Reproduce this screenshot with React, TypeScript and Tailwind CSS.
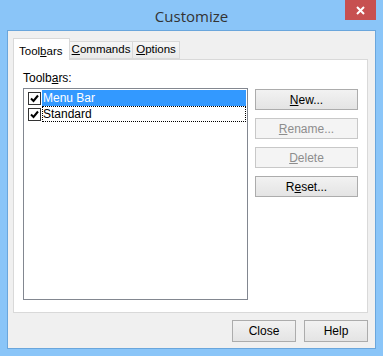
import React from "react";

const font = { fontFamily: '"Liberation Sans", Arial, sans-serif' };

function Check() {
  return (
    <div className="w-[13px] h-[13px] border border-[#333] bg-white flex items-center justify-center shrink-0">
      <svg width="9" height="9" viewBox="0 0 9 9">
        <path d="M1 4.5 L3.5 7 L8 1.5" stroke="#000" strokeWidth="2" fill="none" />
      </svg>
    </div>
  );
}

function Btn({ children, disabled }: { children: React.ReactNode; disabled?: boolean }) {
  return (
    <div
      className={
        "h-[21px] w-[103px] flex items-center justify-center text-[12px] border " +
        (disabled
          ? "border-[#c8c8c8] bg-[#f4f4f4] text-[#8d8d8d]"
          : "border-[#acacac] bg-gradient-to-b from-[#f2f2f2] to-[#e4e4e4] text-black")
      }
    >
      {children}
    </div>
  );
}

export default function App() {
  return (
    <div className="w-[383px] h-[356px] bg-[#8ac5f8] flex flex-col" style={font}>
      <div className="h-[30px] relative flex items-center justify-center shrink-0">
        <span className="text-[15px] text-[#333] mt-[2px]" style={{ fontFamily: '"Open Sans", sans-serif' }}>
          Customize
        </span>
        <div className="absolute right-[7px] top-0 w-[31px] h-[20px] bg-[#c75050] flex items-center justify-center">
          <svg width="9" height="9" viewBox="0 0 9 9">
            <path d="M1 1 L8 8 M8 1 L1 8" stroke="#fff" strokeWidth="2" />
          </svg>
        </div>
      </div>
      <div className="mx-[7px] mb-[7px] flex-1 border border-[#6aa6dc] bg-[#f0f0f0] flex flex-col pl-[5px] pr-[7px] pt-[7px] pb-[6px]">
        <div className="flex items-end h-[21px]">
          <div className="h-[22px] w-[57px] bg-white border border-b-0 border-[#d9d9d9] flex items-start pt-[4px] pl-[5px] text-[11.5px] relative z-10 -mb-px">
            Tool<u>b</u>ars
          </div>
          <div className="h-[18px] w-[63px] bg-gradient-to-b from-[#f6f6f6] to-[#eaeaea] border border-[#d9d9d9] border-l-0 flex items-center justify-center text-[11.5px]">
            <u>C</u>ommands
          </div>
          <div className="h-[18px] w-[47px] bg-gradient-to-b from-[#f6f6f6] to-[#eaeaea] border border-[#d9d9d9] border-l-0 flex items-center justify-center text-[11.5px]">
            <u>O</u>ptions
          </div>
        </div>
        <div className="h-[254px] bg-white border border-[#d9d9d9] pl-[9px] pr-[7px] pt-[11px] flex flex-col">
          <div className="text-[12px] leading-[14px] h-[17px]">
            Toolb<u>a</u>rs:
          </div>
          <div className="flex gap-[7px]">
            <div className="w-[225px] h-[212px] border border-[#828790] bg-white pt-[1px] pl-[2px] pr-[1px]">
              <div className="flex items-center h-[16px]">
                <div className="w-[16px] flex justify-center">
                  <Check />
                </div>
                <div className="flex-1 h-[16px] bg-[#3399ff] text-white text-[12px] leading-[16px] pl-[1px]">Menu Bar</div>
              </div>
              <div className="flex items-center h-[16px]">
                <div className="w-[16px] flex justify-center">
                  <Check />
                </div>
                <div className="flex-1 h-[16px] border border-dotted border-black text-[12px] leading-[14px] pl-0">Standard</div>
              </div>
            </div>
            <div className="flex flex-col gap-[8px] pt-[1px]">
              <Btn>
                <span><u>N</u>ew...</span>
              </Btn>
              <Btn disabled>
                <span><u>R</u>ename...</span>
              </Btn>
              <Btn disabled>
                <span><u>D</u>elete</span>
              </Btn>
              <Btn>
                <span>R<u>e</u>set...</span>
              </Btn>
            </div>
          </div>
        </div>
        <div className="flex justify-end gap-[8px] mt-[7px]">
          <div className="h-[22px] w-[64px] border border-[#acacac] bg-gradient-to-b from-[#f2f2f2] to-[#e4e4e4] flex items-center justify-center text-[12px]">
            Close
          </div>
          <div className="h-[22px] w-[64px] border border-[#acacac] bg-gradient-to-b from-[#f2f2f2] to-[#e4e4e4] flex items-center justify-center text-[12px]">
            Help
          </div>
        </div>
      </div>
    </div>
  );
}
